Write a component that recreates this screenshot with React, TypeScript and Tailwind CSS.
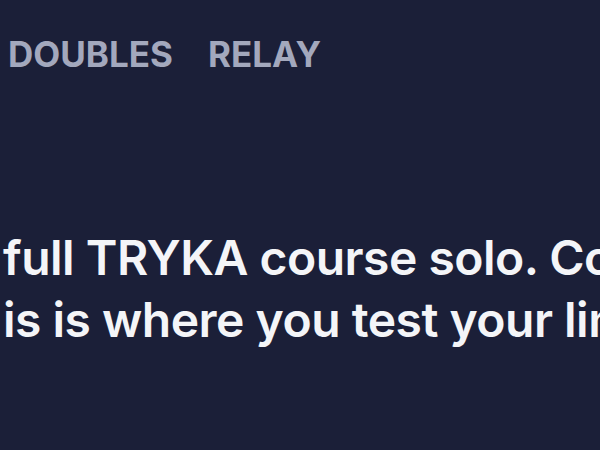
export default function App() {
  return (
    <div
      className="w-[600px] h-[450px] overflow-hidden bg-[#1b1f38] flex flex-col"
      style={{ fontFamily: "Inter, 'Noto Sans', sans-serif" }}
    >
      <div className="flex gap-[35px] pl-[8px] pt-[34px] text-[35px] leading-[40px] font-bold text-[#a3a8bd] whitespace-nowrap">
        <span>DOUBLES</span>
        <span>RELAY</span>
      </div>
      <div className="mt-[153px] pl-[3px] text-[48px] leading-[62px] font-semibold text-[#f4f5f8] tracking-[-0.5px] whitespace-nowrap">
        <div>full TRYKA course solo. Complete every station.</div>
        <div>is is where you test your limits.</div>
      </div>
    </div>
  );
}
